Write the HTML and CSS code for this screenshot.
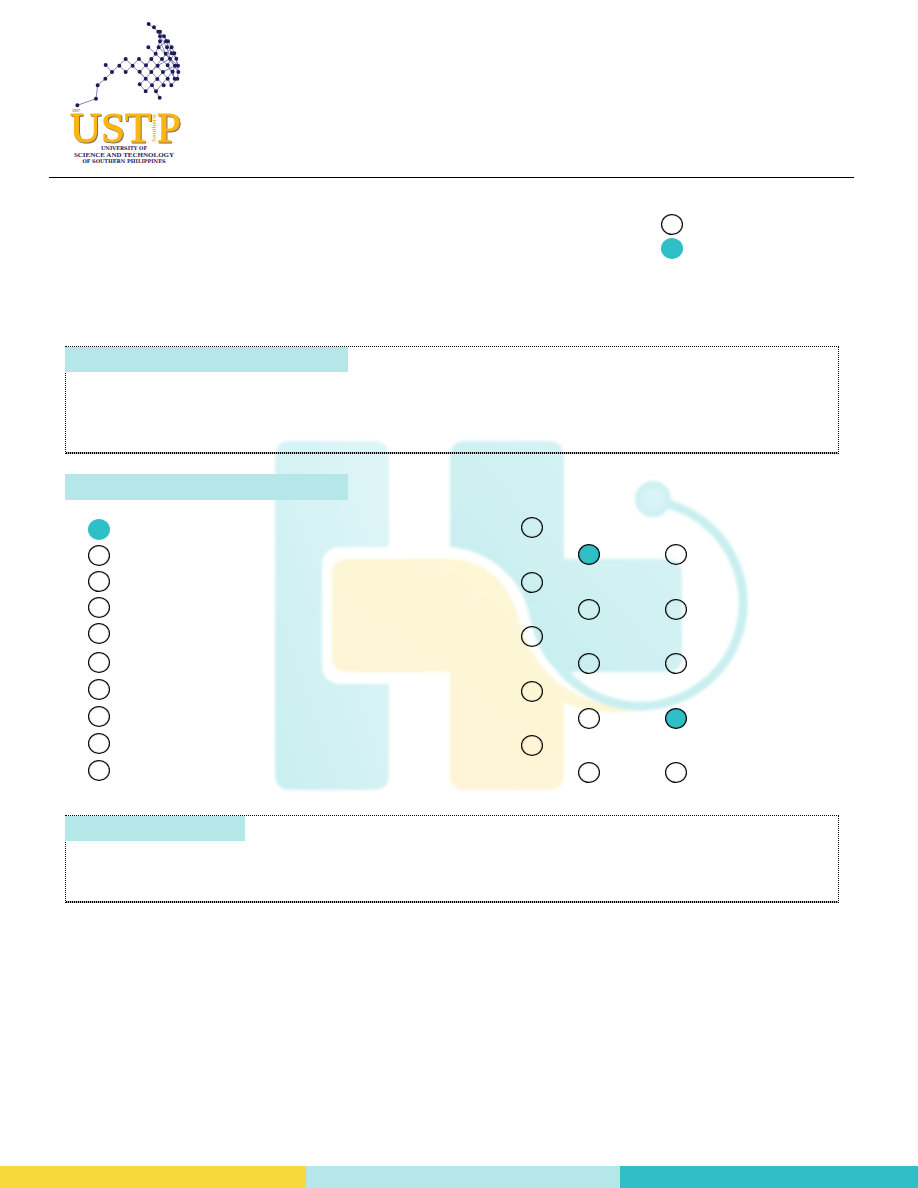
FILE: index.html
```html
<!DOCTYPE html>
<html lang="en">
<head>
<meta charset="utf-8">
<meta name="viewport" content="width=device-width, initial-scale=1">
<title>USTP Form</title>
<link rel="stylesheet" href="styles.css">
</head>
<body>
<header class="header">
<svg class="logo" viewBox="0 0 130 155" role="img" aria-label="University of Science and Technology of Southern Philippines">
<g transform="scale(.33333)">
<path class="links" d="M52 271L108 251L113 211L136 191L156 171L137 150M156 171L197 132L257 191L276 211L299 248M178 152L197 171L237 132L274 171L311 211M239 170L258 151L287 116L300 79V64L295 50L266 27M237 132L258 151M239 170L257 191L239 208L257 229L309 171L345 152M257 191L306 132L335 97M274 132L323 191L334 211L352 191M265 97L287 116L323 151L344 191M288 229L338 170L323 151L343 115M296 97L354 152M300 79L317 116L355 171M312 64L335 115L349 131L355 171L352 191M295 50L312 64L324 79L335 97L343 115L354 152M274 171L293 152L330 131M300 64L321 97L330 131L345 152L338 170L344 191M296 97L318 79"/>
<path class="nodes" d="M52 271h0M108 251h0M113 211h0M136 191h0M156 171h0M137 150h0M178 152h0M197 132h0M197 171h0M218 152h0M237 132h0M239 170h0M258 151h0M257 191h0M239 208h0M257 229h0M274 132h0M274 171h0M276 211h0M287 116h0M265 97h0M293 152h0M292 192h0M288 229h0M299 248h0M306 132h0M309 171h0M311 211h0M296 97h0M300 79h0M300 64h0M295 50h0M282 37h0M266 27h0M300 50h0M312 64h0M318 79h0M324 79h0M321 97h0M335 97h0M317 116h0M335 115h0M343 115h0M330 131h0M349 131h0M323 151h0M345 152h0M354 152h0M338 170h0M355 171h0M323 191h0M344 191h0M352 191h0M334 211h0"/>
</g>
<text class="year" x="12" y="97">1927</text>
<g class="name"><text x="10" y="127">UST</text><text x="97" y="127">P</text></g>
<text class="region" transform="translate(96 127) rotate(-90)">Southern</text>
<g class="caption" text-anchor="middle">
<text class="small" x="64" y="135">UNIVERSITY OF</text>
<text class="large" x="64" y="142">SCIENCE AND TECHNOLOGY</text>
<text class="small" x="64" y="148">OF SOUTHERN PHILIPPINES</text>
</g>
</svg>
</header>
<main class="main">
<svg class="watermark" viewBox="265 430 490 370" aria-hidden="true">
<defs>
<linearGradient id="teal-left" x1="0" y1="1" x2="1" y2="0"><stop offset="0" stop-color="#c9eff0"/><stop offset="1" stop-color="#e0f5f8"/></linearGradient>
<linearGradient id="teal-right" x1="0" y1="1" x2="1" y2="0"><stop offset=".3" stop-color="#caeff0"/><stop offset="1" stop-color="#dbf4f6"/></linearGradient>
<linearGradient id="yellow" x1="0" y1="1" x2="1" y2="0"><stop offset="0" stop-color="#fdf2d4"/><stop offset="1" stop-color="#fdf9d6"/></linearGradient>
<radialGradient id="dot"><stop offset=".5" stop-color="#d9f3f6"/><stop offset="1" stop-color="#caeff1"/></radialGradient>
<filter id="soft" x="-5%" y="-5%" width="110%" height="110%"><feGaussianBlur stdDeviation="1.8"/></filter>
</defs>
<g filter="url(#soft)">
<path fill="url(#teal-left)" d="M291 441H373Q389 441 389 457V547H342Q322 547 322 567V664Q322 684 342 684H389V774Q389 790 373 790H291Q275 790 275 774V457Q275 441 291 441Z"/>
<path fill="url(#yellow)" d="M348 559H450C492 560 512 590 521 625C531 662 564 707 640 709C612 717 586 710 564 703V774Q564 790 548 790H466Q450 790 450 774V672H348Q332 672 332 656V575Q332 559 348 559Z"/>
<path fill="url(#teal-right)" d="M466 441H548Q564 441 564 457V559H666Q682 559 682 575V656Q682 672 666 672H571L578 686C546 668 536 646 529 614C521 577 488 550 450 547V457Q450 441 466 441Z"/>
<path fill="none" stroke="#caeff0" stroke-width="9" d="M547 647A103 103 0 1 0 668 504"/>
<circle cx="653" cy="499" r="18" fill="url(#dot)"/>
</g>
</svg>
<div class="legend">
<input class="mark" type="radio" name="legend-blank" aria-label="Not selected">
<input class="mark plain" type="radio" name="legend-filled" aria-label="Selected" checked>
</div>
<section class="box box-tall"><div class="tab"></div></section>
<div class="tab section-tab"></div>
<section class="answers">
<div class="list">
<div class="marks">
<input class="mark plain" type="radio" name="item" aria-label="Item 1" checked>
<input class="mark" type="radio" name="item" aria-label="Item 2">
<input class="mark" type="radio" name="item" aria-label="Item 3">
<input class="mark" type="radio" name="item" aria-label="Item 4">
<input class="mark" type="radio" name="item" aria-label="Item 5">
</div>
<div class="marks marks-loose">
<input class="mark" type="radio" name="item" aria-label="Item 6">
<input class="mark" type="radio" name="item" aria-label="Item 7">
<input class="mark" type="radio" name="item" aria-label="Item 8">
<input class="mark" type="radio" name="item" aria-label="Item 9">
<input class="mark" type="radio" name="item" aria-label="Item 10">
</div>
</div>
<div class="questions">
<div class="question"><input class="mark" type="checkbox" aria-label="Question 1"><input class="mark" type="radio" name="q1" aria-label="Question 1, first choice" checked><input class="mark" type="radio" name="q1" aria-label="Question 1, second choice"></div>
<div class="question"><input class="mark" type="checkbox" aria-label="Question 2"><input class="mark" type="radio" name="q2" aria-label="Question 2, first choice"><input class="mark" type="radio" name="q2" aria-label="Question 2, second choice"></div>
<div class="question"><input class="mark" type="checkbox" aria-label="Question 3"><input class="mark" type="radio" name="q3" aria-label="Question 3, first choice"><input class="mark" type="radio" name="q3" aria-label="Question 3, second choice"></div>
<div class="question"><input class="mark" type="checkbox" aria-label="Question 4"><input class="mark" type="radio" name="q4" aria-label="Question 4, first choice"><input class="mark" type="radio" name="q4" aria-label="Question 4, second choice" checked></div>
<div class="question"><input class="mark" type="checkbox" aria-label="Question 5"><input class="mark" type="radio" name="q5" aria-label="Question 5, first choice"><input class="mark" type="radio" name="q5" aria-label="Question 5, second choice"></div>
</div>
</section>
<section class="box box-short"><div class="tab tab-short"></div></section>
</main>
<footer class="footer"><div class="band yellow"></div><div class="band pale"></div><div class="band teal"></div></footer>
</body>
</html>
```
FILE: styles.css
```css
* { box-sizing: border-box; }

body {
  margin: 0;
  min-height: 100vh;
  display: flex;
  flex-direction: column;
  background: #fff;
  font-family: "Liberation Serif", serif;
}

/* Header and logo */
.header {
  margin: 0 64px 0 49px;
  padding: 15px 11px 7px;
  border-bottom: 1px solid #000;
}
.logo { display: block; width: 130px; height: 155px; }
.links { fill: none; stroke: #8683b4; stroke-width: 3; }
.nodes { fill: none; stroke: #1e1b58; stroke-width: 12; stroke-linecap: round; }
.year { font-size: 4px; fill: #1e1b58; }
.name {
  font-size: 43px;
  fill: #fdb515;
  stroke: #fdb515;
  stroke-width: 1px;
  filter: drop-shadow(1px 1px 0 #77735f);
}
.region { font-size: 7px; font-weight: bold; fill: #fdb515; }
.caption { fill: #1e1b58; font-weight: bold; }
.small { font-family: "DejaVu Serif", serif; font-size: 5px; }
.large { font-size: 7px; }

/* Form */
.main {
  position: relative;
  z-index: 0;
  flex: 1;
  padding: 36px 79px 40px 65px;
}
.watermark {
  position: absolute;
  z-index: -1;
  top: 252px;
  left: 265px;
  width: 490px;
  height: 370px;
}
.legend {
  display: flex;
  flex-direction: column;
  gap: 3px;
  margin: 0 0 87px 596px;
}
.mark {
  appearance: none;
  display: block;
  width: 22px;
  height: 21px;
  margin: 0;
  border: 1px solid #000;
  border-radius: 50%;
  box-shadow: inset 0 0 1px #000;
}
.mark:checked { background: #30bfc6; }
.mark.plain:checked { border-color: #30bfc6; box-shadow: none; }

.box {
  border: 1px dotted #000;
  border-bottom: 0;
  background: repeating-linear-gradient(90deg, #000 0 1px, #aaa 1px 2px) bottom / 100% 2px no-repeat;
}
.box-tall { min-height: 108px; }
.box-short { min-height: 88px; margin-top: 32px; }
.tab {
  width: 283px;
  height: 25px;
  margin-left: -1px;
  background: #b5e7e8;
}
.section-tab { height: 26px; margin: 20px 0 17px; }
.tab-short { width: 180px; }

.answers { display: flex; padding-left: 23px; }
.list {
  display: flex;
  flex-direction: column;
  gap: 8px;
  width: 433px;
  padding: 2px 0;
}
.marks { display: flex; flex-direction: column; gap: 5px; }
.marks-loose { gap: 6px; }
.questions {
  display: flex;
  flex-direction: column;
  justify-content: space-between;
}
.question {
  display: grid;
  grid-template-columns: 57px 87px 22px;
  row-gap: 6px;
}
.question .mark:first-child { grid-column: 1 / -1; }
.question .mark:nth-child(2) { grid-column: 2; }

/* Footer bands */
.footer {
  display: grid;
  grid-template-columns: 306fr 314fr 298fr;
  height: 22px;
}
.yellow { background: #f7d939; }
.pale { background: #b5e7e8; }
.teal { background: #30bfc6; }
```
